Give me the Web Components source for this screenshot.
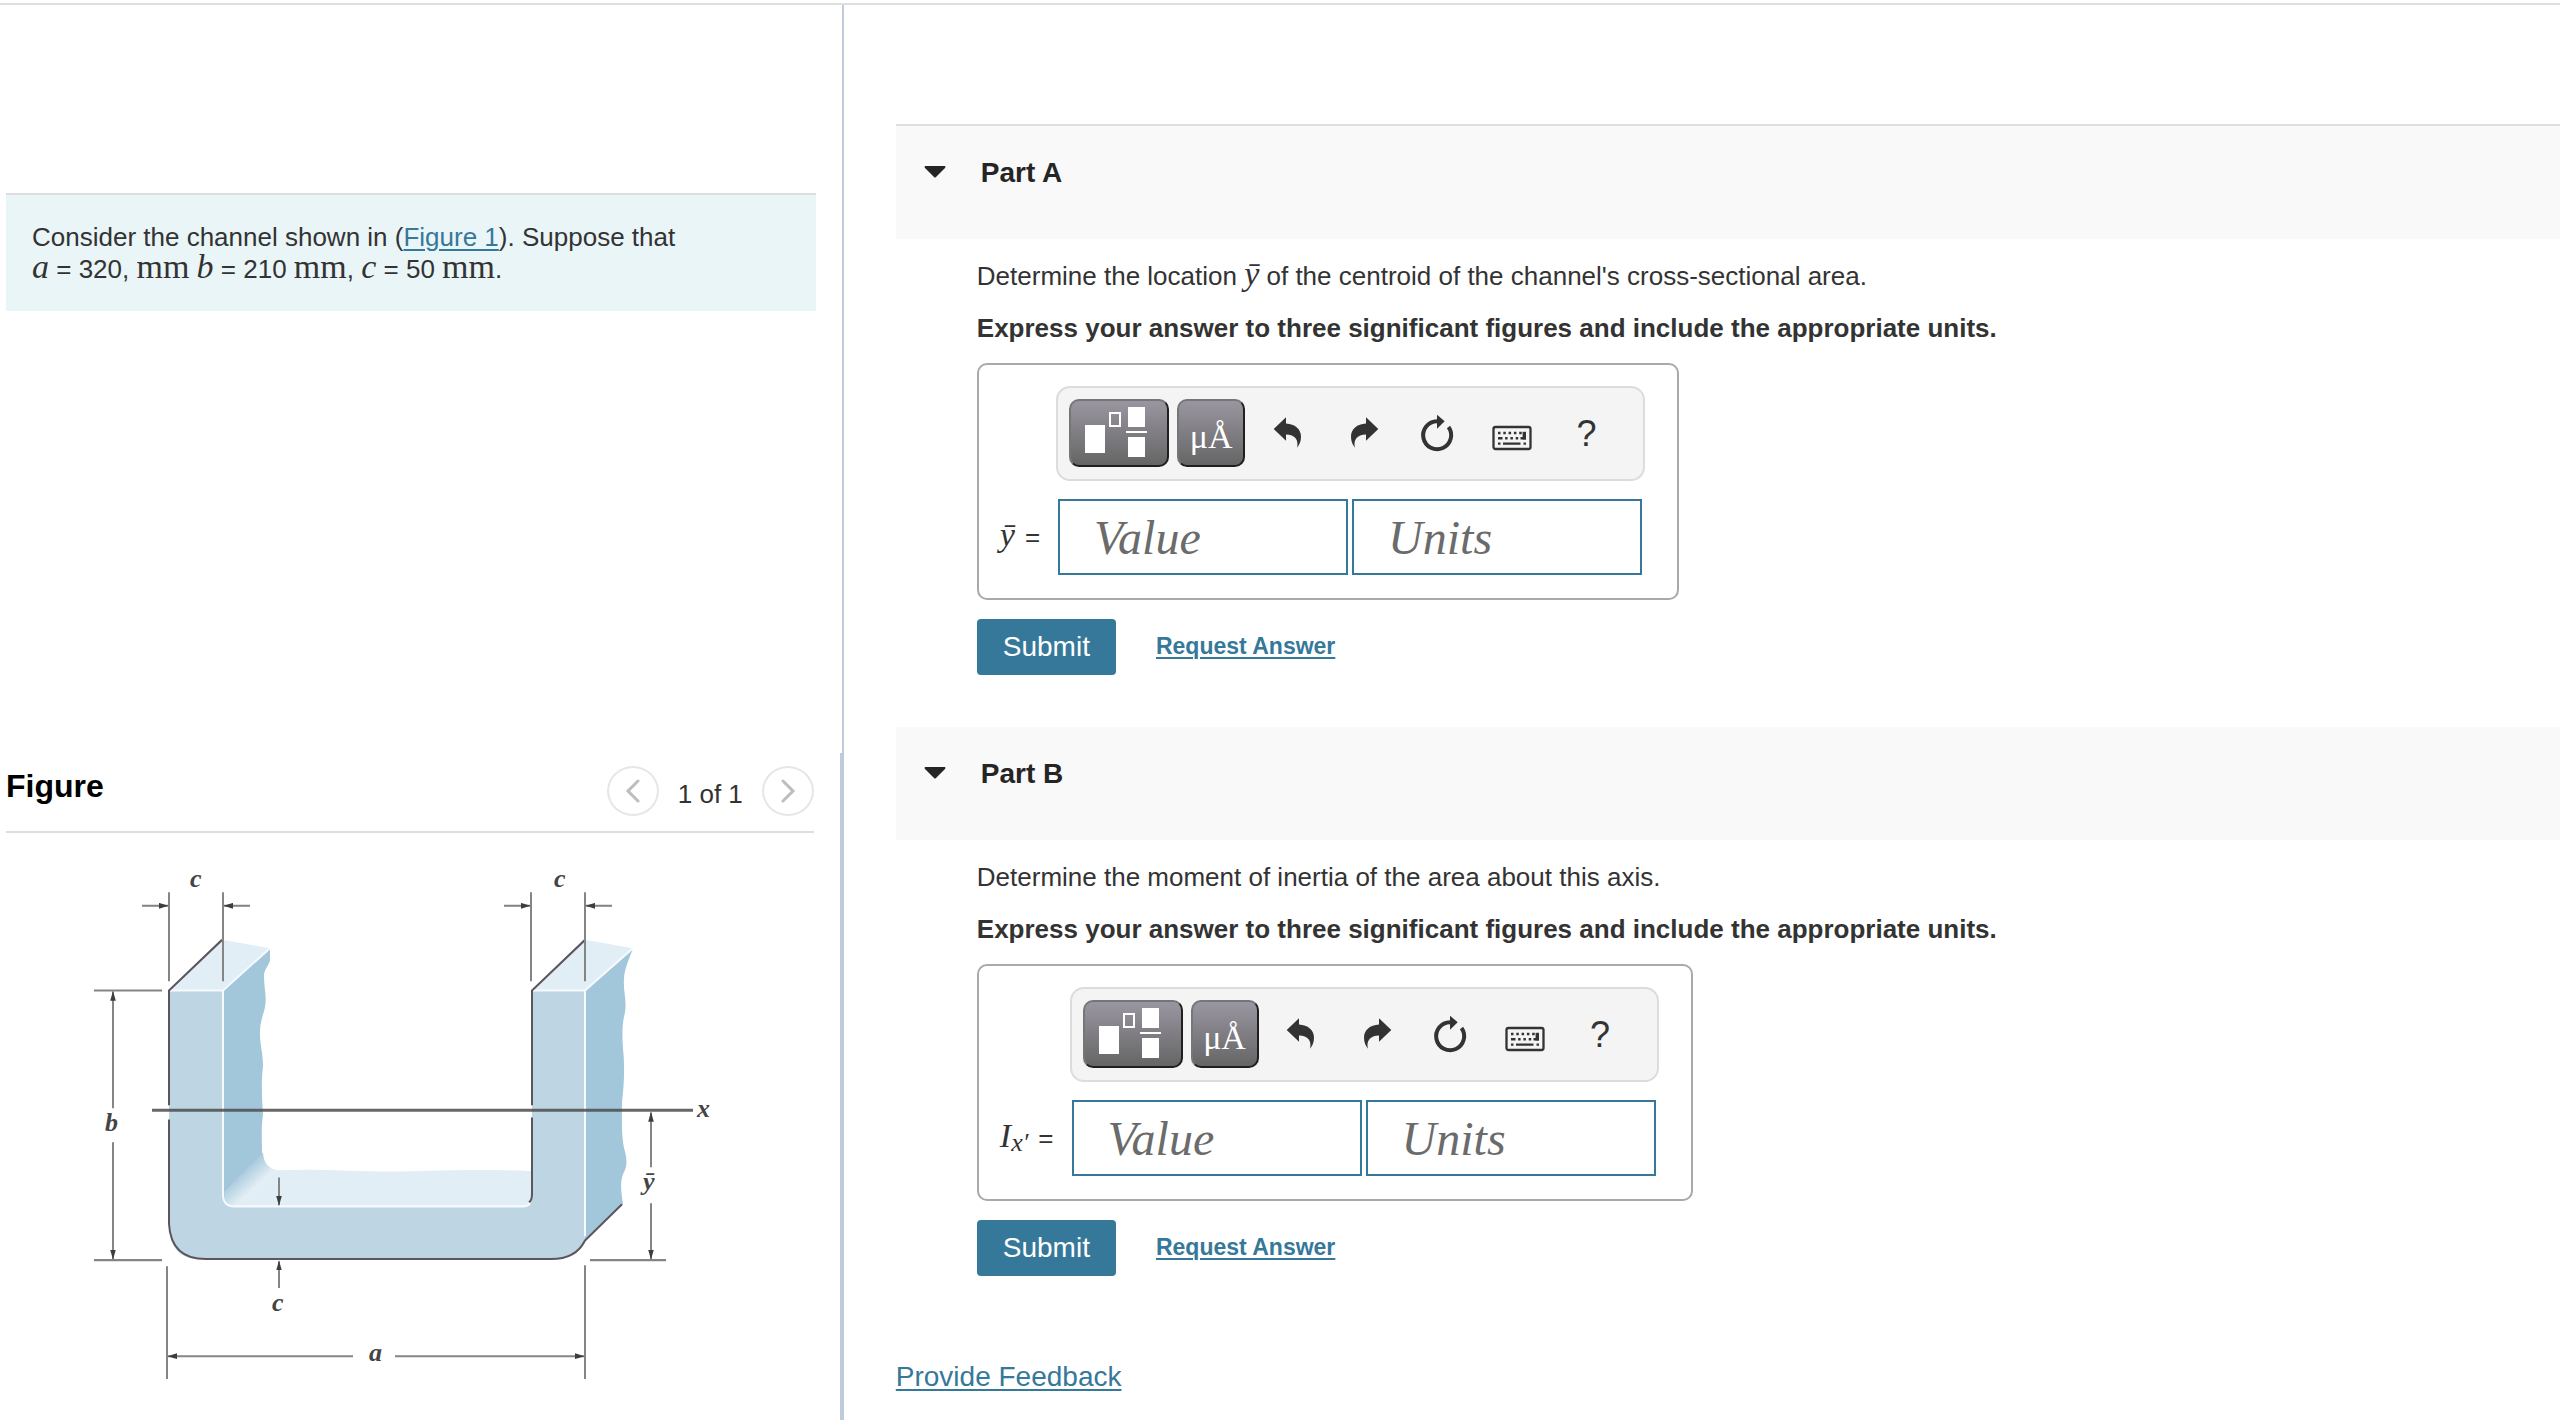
<!DOCTYPE html>
<html lang="en">
<head>
<meta charset="utf-8">
<title>Channel centroid</title>
<style>
  body {
    margin: 0;
    font: 26px/32px "Liberation Sans", Arial, sans-serif;
    color: #333;
    background: #fff;
  }
</style>
</head>
<body>
<problem-page>
  <problem-statement slot="problem">
    Consider the channel shown in (<a href="#figure">Figure 1</a>). Suppose that<br>
    <math-text><i>a</i></math-text> = 320, <math-text>mm</math-text>
    <math-text><i>b</i></math-text> = 210 <math-text>mm</math-text>,
    <math-text><i>c</i></math-text> = 50 <math-text>mm</math-text>.
  </problem-statement>

  <figure-panel slot="figure" id="figure">
    <channel-drawing></channel-drawing>
  </figure-panel>

  <problem-part heading="Part A" class="ruled">
    <span slot="question">Determine the location <math-text><i>ȳ</i></math-text> of the centroid of the channel's cross-sectional area.</span>
    <span slot="instruction">Express your answer to three significant figures and include the appropriate units.</span>
    <answer-box><math-text><i>ȳ</i></math-text></answer-box>
  </problem-part>

  <problem-part heading="Part B">
    <span slot="question">Determine the moment of inertia of the area about this axis.</span>
    <span slot="instruction">Express your answer to three significant figures and include the appropriate units.</span>
    <answer-box><math-text><i>I</i><sub><i>x′</i></sub></math-text></answer-box>
  </problem-part>
</problem-page>

<script>
class BaseElement extends HTMLElement {
  constructor() {
    super();
    this.shadow = this.attachShadow({ mode: "open" });
  }

  connectedCallback() {
    const tmpl = document.createElement("template");
    tmpl.innerHTML = `<style>${this.styles()}</style>${this.markup()}`;
    this.shadow.replaceChildren(tmpl.content.cloneNode(true));
  }
}

class ProblemPage extends BaseElement {
  styles() {
    return `
  :host {
    display: grid;
    grid-template-columns: 33% minmax(0, 1fr);
    box-sizing: border-box;
    min-height: calc(100vh - 3px);
    margin-top: 3px;
    border-top: 2px solid #dedede;
  }

  aside {
    display: flex;
    flex-direction: column;
    margin-right: 1px;
  }

  .problem {
    flex: 1;
    padding: 188px 26px 0 6px;
    border-right: 2px solid #bfcbdd;
  }

  .figure {
    padding: 13px 26px 30px 6px;
    border-right: 4px solid #bfcbdd;
  }

  main {
    padding: 119px 0 24px 51px;
  }

  .feedback {
    display: inline-block;
    margin-top: 33px;
    font-size: 28px;
    color: #36789a;
    text-underline-offset: 3px;
    text-decoration-thickness: 2px;
  }
`;
  }

  markup() {
    return `
<aside>
  <div class="problem"><slot name="problem"></slot></div>
  <div class="figure"><slot name="figure"></slot></div>
</aside>
<main>
  <slot></slot>
  <a class="feedback" href="#feedback">Provide Feedback</a>
</main>
`;
  }
}

class ProblemStatement extends BaseElement {
  styles() {
    return `
  :host {
    display: block;
    padding: 26px;
    border-top: 2px solid #dedede;
    background: #eaf5f8;
  }

  ::slotted(a) {
    color: #36789a;
    text-underline-offset: 3px;
    text-decoration-thickness: 2px;
  }
`;
  }

  markup() {
    return `<slot></slot>`;
  }
}

class MathText extends BaseElement {
  styles() {
    return `
  :host {
    font-family: "Liberation Serif", "Times New Roman", serif;
    font-size: 34px;
    line-height: 0;
  }

  ::slotted(sub) {
    font-size: 26px;
    line-height: 0;
    vertical-align: -4px;
  }
`;
  }

  markup() {
    return `<slot></slot>`;
  }
}

class FigurePanel extends BaseElement {
  styles() {
    return `
  :host {
    display: block;
  }

  header {
    display: flex;
    justify-content: space-between;
    align-items: flex-start;
    padding-bottom: 15px;
    border-bottom: 2px solid #dedede;
    margin-bottom: 17px;
  }

  h2 {
    margin: 0;
    font-size: 32px;
    line-height: 40px;
    color: #000;
  }

  nav {
    display: flex;
    align-items: flex-end;
    gap: 19px;
    line-height: 44px;
  }

  button {
    display: grid;
    place-items: center;
    width: 52px;
    height: 50px;
    padding: 0;
    border: 2px solid #e6e6e6;
    border-radius: 50%;
    background: #fff;
  }

  path {
    fill: none;
    stroke: #bdbdbd;
    stroke-width: 3;
    stroke-linecap: round;
  }
`;
  }

  markup() {
    return `
<header>
  <h2>Figure</h2>
  <nav aria-label="Figures">
    <button type="button" aria-label="Previous figure">
      <svg width="16" height="24" viewBox="0 0 16 24"><path d="M13 2 3 12l10 10"/></svg>
    </button>
    <span>1 of 1</span>
    <button type="button" aria-label="Next figure">
      <svg width="16" height="24" viewBox="0 0 16 24"><path d="M3 2l10 10L3 22"/></svg>
    </button>
  </nav>
</header>
<slot></slot>
`;
  }
}

class ChannelDrawing extends BaseElement {
  styles() {
    return `
  :host {
    display: block;
    padding-left: 74px;
  }

  svg {
    display: block;
    width: 650px;
    max-width: 100%;
  }

  .front { fill: #bed5e3; }
  .top { fill: #e2eef5; }
  .side { fill: #a2c6da; }

  .light {
    fill: none;
    stroke: #f6fafc;
    stroke-width: 2;
    stroke-linejoin: round;
  }

  .edge {
    fill: none;
    stroke: #5a565b;
    stroke-width: 2;
    stroke-linejoin: round;
  }

  .axis {
    stroke: #4c4c4c;
    stroke-opacity: 0.85;
    stroke-width: 3;
  }

  .guide {
    fill: none;
    stroke: #858585;
    stroke-width: 2;
  }

  .arrow { marker-end: url(#head); }
  marker path { fill: #3d3d3d; }

  text {
    font: italic bold 26px "Liberation Serif", "Times New Roman", serif;
    fill: #444;
  }
`;
  }

  markup() {
    return `
<svg viewBox="0 0 650 540" role="img" aria-label="Channel cross section with dimensions a, b and c">
  <defs>
    <marker id="head" markerUnits="userSpaceOnUse" markerWidth="10" markerHeight="6" refX="9" refY="3" orient="auto">
      <path d="M0 0.2 9.5 3 0 5.8Z"/>
    </marker>
    <linearGradient id="fillet" gradientUnits="userSpaceOnUse" x1="158" y1="312" x2="173" y2="329">
      <stop offset="0" stop-color="#a2c6da"/>
      <stop offset="1" stop-color="#e4eff5"/>
    </linearGradient>
  </defs>

  <g transform="scale(1 1.033)">
    <!-- faces -->
    <path class="top" d="M184 304Q187 310 198 310C240 308 280 312 330 311S410 309 452 311V345H150Z"/>
    <path class="side" d="M143 136 190 95V107C188 113 184 116 184 122C184 134 187 142 185 152C183 161 180 166 180 178C180 190 183 196 183 209C181 225 182 240 183 256C181 270 182 282 182 292Q183 300 186 305L148 344Q143 340 143 332Z"/>
    <path fill="url(#fillet)" d="M144 331 183 293Q184 308 198 310L157 345H150Q144 341 144 331Z"/>
    <path class="top" d="M89 136 142 87 190 95 143 136ZM452 136 505 87 553 95 505 136Z"/>
    <path class="side" d="M505 136 553 95C549 106 544 116 544 125C543 136 547 146 545 157C542 168 542 180 543 192C545 210 544 228 542 244C542 260 541 278 545 292C548 304 546 308 543 314C540 322 541 330 543 343L505 377Z"/>
    <path class="front" d="M89 136H143V333Q143 345 154 345H444Q452 345 452 335V136H505V377Q497 396 471 396H120Q89 396 89 362Z"/>

    <!-- edges -->
    <path class="light" d="M90 136H143L190 95M143 136V333Q143 345 154 345H444Q448 345 450 342M453 136H505L553 95M505 136V374"/>
    <path class="edge" d="M89 247V136L142 87M89 261V362Q91 396 126 396H471Q496 396 505 378L542 343M452 247V136L505 87M452 259V333Q452 339 449 341"/>
    <path class="axis" d="M72 252H613"/>

    <!-- dimension lines -->
    <path class="guide" d="M89 41V127M143 41V127M451 41V127M505 41V127M14 136H82M14 397H82M510 397H586M87 403V512M505 402V512"/>
    <path class="guide arrow" d="M62 54H88"/>
    <path class="guide arrow" d="M170 54H144"/>
    <path class="guide arrow" d="M424 54H450"/>
    <path class="guide arrow" d="M532 54H506"/>
    <path class="guide arrow" d="M33 250V137"/>
    <path class="guide arrow" d="M33 283V396"/>
    <path class="guide arrow" d="M571 307V254"/>
    <path class="guide arrow" d="M571 342V396"/>
    <path class="guide arrow" d="M199 317V344"/>
    <path class="guide arrow" d="M199 424V398"/>
    <path class="guide arrow" d="M273 490H88"/>
    <path class="guide arrow" d="M315 490H504"/>
  </g>

  <text x="110" y="37">c</text>
  <text x="474" y="37">c</text>
  <text x="25" y="281">b</text>
  <text x="617" y="267">x</text>
  <text x="563" y="340">ȳ</text>
  <text x="192" y="461">c</text>
  <text x="289" y="511">a</text>
</svg>
`;
  }
}

class ProblemPart extends BaseElement {
  styles() {
    return `
  :host {
    display: block;
    margin-bottom: 52px;
  }

  h2 {
    margin: 0;
    padding: 31px 28px 50px;
    background: #f9f9f9;
    font-size: 28px;
    line-height: 32px;
  }

  :host(.ruled) h2 {
    border-top: 2px solid #dedede;
  }

  h2 button {
    display: flex;
    align-items: center;
    gap: 35px;
    padding: 0;
    border: 0;
    background: none;
    font: inherit;
    color: #252525;
  }

  .body {
    padding: 21px 28px 0 81px;
  }

  p {
    margin: 0 0 20px;
  }

  .instruction {
    margin-bottom: 19px;
    font-weight: bold;
  }

  .actions {
    display: flex;
    align-items: center;
    gap: 40px;
    margin-top: 19px;
  }

  .submit {
    height: 56px;
    padding: 0 26px;
    border: 0;
    border-radius: 4px;
    background: #36789a;
    font: 28px/32px "Liberation Sans", Arial, sans-serif;
    color: #fff;
  }

  .actions a {
    padding-bottom: 2px;
    font-size: 23px;
    font-weight: bold;
    color: #36789a;
    text-underline-offset: 3px;
    text-decoration-thickness: 2px;
  }
`;
  }

  markup() {
    return `
<h2>
  <button type="button" aria-expanded="true">
    <svg width="22" height="14" viewBox="0 0 22 14"><path fill="#252525" d="M1 0H21Q22 1 21 2L12 11Q11 12 10 11L1 2Q0 1 1 0Z"/></svg>
    <span>${this.getAttribute("heading")}</span>
  </button>
</h2>
<div class="body">
  <p><slot name="question"></slot></p>
  <p class="instruction"><slot name="instruction"></slot></p>
  <slot></slot>
  <div class="actions">
    <button class="submit" type="button">Submit</button>
    <a href="#answer">Request Answer</a>
  </div>
</div>
`;
  }
}

class AnswerBox extends BaseElement {
  styles() {
    return `
  :host {
    display: grid;
    grid-template-columns: auto auto;
    row-gap: 18px;
    width: max-content;
    padding: 21px 32px 23px 21px;
    border: 2px solid #a9a9a9;
    border-radius: 10px;
  }

  math-toolbar {
    grid-column: 2;
  }

  label {
    display: flex;
    align-items: center;
    gap: 10px;
    padding-right: 16px;
  }

  .fields {
    display: flex;
    gap: 4px;
    padding: 0 2px;
  }

  input {
    box-sizing: border-box;
    width: 290px;
    height: 76px;
    padding: 0 34px;
    border: 2px solid #36789a;
    border-radius: 0;
    background: #fff;
    font: italic 48px "Liberation Serif", "Times New Roman", serif;
    color: #333;
  }

  input::placeholder {
    color: #6b6b6b;
    opacity: 1;
  }
`;
  }

  markup() {
    return `
<math-toolbar></math-toolbar>
<label for="value"><span><slot></slot></span><span>=</span></label>
<div class="fields">
  <input id="value" type="text" placeholder="Value">
  <input type="text" placeholder="Units" aria-label="Units">
</div>
`;
  }
}

class MathToolbar extends BaseElement {
  styles() {
    return `
  :host {
    display: flex;
    gap: 8px;
    padding: 11px 23px 12px 11px;
    border: 2px solid #dcdcdc;
    border-radius: 14px;
    background: #f4f4f4;
  }

  button {
    display: grid;
    place-items: center;
    box-sizing: border-box;
    width: 67px;
    height: 68px;
    padding: 2px 0 0;
    border: 0;
    background: none;
    color: #333;
  }

  .dark {
    width: 68px;
    padding: 0;
    border: 2px solid;
    border-color: #767676 #1f1f1f #1f1f1f #767676;
    border-radius: 10px;
    background: linear-gradient(#9a96a1, #656565);
    color: #fff;
  }

  .wide {
    width: 100px;
  }

  .symbols {
    padding-top: 8px;
    font: 34px/40px "Liberation Serif", "Times New Roman", serif;
  }

  .help {
    font: 36px/40px "Liberation Sans", Arial, sans-serif;
  }
`;
  }

  markup() {
    return `
<button class="dark wide" type="button" aria-label="Templates">
  <svg width="96" height="64" viewBox="2 2 96 64" fill="#fff">
    <path d="M16 26H36V54H16ZM59 8H76V28H59ZM57 32H78V34H57ZM59 38H76V58H59Z"/>
    <path d="M41 14H51V27H41Z" fill="none" stroke="#fff" stroke-width="2"/>
  </svg>
</button>
<button class="dark symbols" type="button" aria-label="Symbols">μÅ</button>
<button type="button" aria-label="Undo">
  <svg width="40" height="40" viewBox="0 0 40 40"><path fill="currentColor" d="M6.7 15 19 3.3V9.5C28 10 34 15 34 22.5Q34 29 30 33.7C32 26 28 20.5 19 20.5V26.7Z"/></svg>
</button>
<button type="button" aria-label="Redo">
  <svg width="40" height="40" viewBox="0 0 40 40"><path fill="currentColor" d="M36.3 15 24 3.3V9.5C15 10 9 15 9 22.5Q9 29 13 33.7C11 26 15 20.5 24 20.5V26.7Z"/></svg>
</button>
<button type="button" aria-label="Reset">
  <svg width="40" height="40" viewBox="0 0 40 40">
    <path fill="none" stroke="currentColor" stroke-width="4" d="M31.5 13A14 14 0 1 1 20 7.2"/>
    <path fill="currentColor" d="M20 0.7 27.7 7.3 20 14.7Z"/>
  </svg>
</button>
<button type="button" aria-label="Keyboard shortcuts">
  <svg width="40" height="40" viewBox="0 0 40 40" fill="none" stroke="currentColor">
    <rect x="1.5" y="13" width="37" height="22" rx="2" stroke-width="2.3"/>
    <path stroke-width="2.4" stroke-dasharray="2.5 2.8" d="M6 19H30"/>
    <path stroke-width="2.4" stroke-dasharray="4.5 2.6 2.5 2.8 2.5 2.8 2.5 2.8 2.5 2.8" d="M6 24.3H28"/>
    <path stroke-width="2.4" d="M28.5 24.3H34M6 29.6H8.5M11 29.6H28.5M31.5 29.6H34"/>
    <path stroke-width="3.4" d="M32.3 17.8V25.5"/>
  </svg>
</button>
<button class="help" type="button" aria-label="Help">?</button>
`;
  }
}

customElements.define("problem-page", ProblemPage);
customElements.define("problem-statement", ProblemStatement);
customElements.define("math-text", MathText);
customElements.define("figure-panel", FigurePanel);
customElements.define("channel-drawing", ChannelDrawing);
customElements.define("problem-part", ProblemPart);
customElements.define("answer-box", AnswerBox);
customElements.define("math-toolbar", MathToolbar);
</script>
</body>
</html>
